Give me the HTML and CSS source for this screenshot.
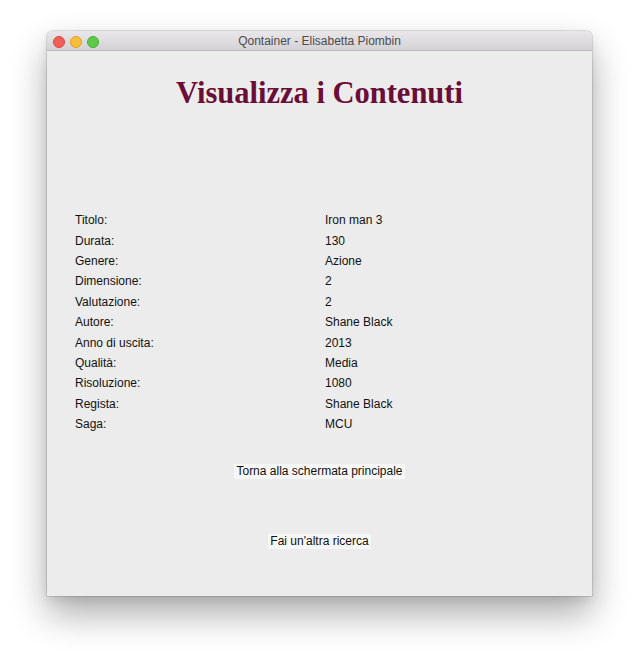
FILE: index.html
```html
<!DOCTYPE html>
<html lang="it">
<head>
<meta charset="utf-8">
<title>Qontainer - Elisabetta Piombin</title>
<link rel="stylesheet" href="styles.css">
</head>
<body>
<div class="window">
  <div class="titlebar">
    <div class="lights">
      <span class="light red"></span>
      <span class="light yellow"></span>
      <span class="light green"></span>
    </div>
    <div class="title">Qontainer - Elisabetta Piombin</div>
  </div>
  <div class="content">
    <h1 class="heading">Visualizza i Contenuti</h1>
    <div class="details">
      <div class="label">Titolo:</div><div class="value">Iron man 3</div>
      <div class="label">Durata:</div><div class="value">130</div>
      <div class="label">Genere:</div><div class="value">Azione</div>
      <div class="label">Dimensione:</div><div class="value">2</div>
      <div class="label">Valutazione:</div><div class="value">2</div>
      <div class="label">Autore:</div><div class="value">Shane Black</div>
      <div class="label">Anno di uscita:</div><div class="value">2013</div>
      <div class="label">Qualità:</div><div class="value">Media</div>
      <div class="label">Risoluzione:</div><div class="value">1080</div>
      <div class="label">Regista:</div><div class="value">Shane Black</div>
      <div class="label">Saga:</div><div class="value">MCU</div>
    </div>
    <div class="actions">
      <button class="btn btn-home">Torna alla schermata principale</button>
      <button class="btn btn-search">Fai un'altra ricerca</button>
    </div>
  </div>
</div>
</body>
</html>
```
FILE: styles.css
```css
html, body {
  margin: 0;
  padding: 0;
  background: #ffffff;
}
body {
  width: 640px;
  height: 659px;
  overflow: hidden;
  font-family: "Liberation Sans", Arial, sans-serif;
}
.window {
  margin: 31px 0 0 47px;
  width: 545px;
  height: 565px;
  background: #ececec;
  border-radius: 5px 5px 0 0;
  box-shadow: 0 0 0 0.5px rgba(0,0,0,0.22), 0 18px 36px rgba(0,0,0,0.33), 0 4px 10px rgba(0,0,0,0.08);
  display: flex;
  flex-direction: column;
  overflow: hidden;
}
.titlebar {
  height: 19px;
  border-bottom: 1px solid #b9b9b9;
  background: linear-gradient(#e9e7e9, #d4d2d4);
  position: relative;
  display: flex;
  align-items: center;
  justify-content: center;
  flex: none;
}
.lights {
  position: absolute;
  left: 6px;
  top: 5px;
  display: flex;
  gap: 5px;
}
.light {
  width: 12px;
  height: 12px;
  border-radius: 50%;
  box-sizing: border-box;
}
.red { background: #ee5f58; border: 0.5px solid #d8473f; }
.yellow { background: #f9bd3c; border: 0.5px solid #dea123; }
.green { background: #5cc94b; border: 0.5px solid #45ae33; }
.title {
  font-family: "Liberation Sans", Arial, sans-serif;
  font-size: 12px;
  color: #4c4c4c;
  line-height: 19px;
  padding-top: 1px;
}
.content {
  flex: 1;
  display: flex;
  flex-direction: column;
  padding: 0 28px;
}
.heading {
  margin: 24px 0 0 0;
  font-family: "Liberation Serif", "Times New Roman", serif;
  font-weight: bold;
  font-size: 30.5px;
  line-height: 36px;
  color: #6a0e38;
  text-align: center;
}
.details {
  margin-top: 99px;
  display: grid;
  grid-template-columns: 250px 1fr;
  grid-auto-rows: 20.4px;
  font-size: 12px;
  color: #111;
  align-items: center;
}
.actions {
  margin-top: 30px;
  display: flex;
  flex-direction: column;
  align-items: center;
  gap: 55px;
}
.btn {
  font-family: "Liberation Sans", Arial, sans-serif;
  font-size: 12px;
  color: #111;
  background: #f7f7f7;
  border: none;
  padding: 0 2px;
  height: 15px;
  line-height: 15px;
  margin: 0;
}
```
